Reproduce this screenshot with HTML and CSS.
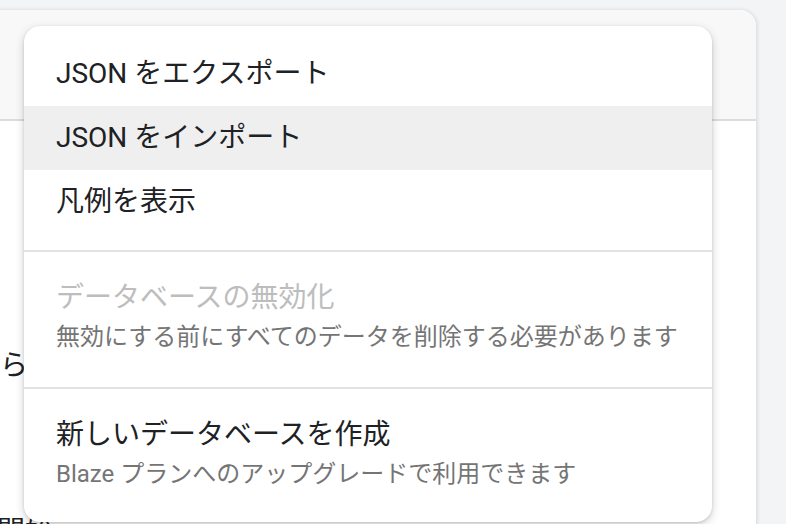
FILE: index.html
```html
<!DOCTYPE html>
<html lang="ja">
<head>
<meta charset="utf-8">
<link rel="stylesheet" href="styles.css">
</head>
<body>
<div class="card">
  <div class="card-header"></div>
  <div class="card-body">
    <p class="line line-a">ここから、</p>
    <p class="line line-b">開始</p>
  </div>
</div>
<div class="menu">
  <div class="item">JSON をエクスポート</div>
  <div class="item hover">JSON をインポート</div>
  <div class="item">凡例を表示</div>
  <div class="divider"></div>
  <div class="item2 item2-mid">
    <div class="title disabled">データベースの無効化</div>
    <div class="sub">無効にする前にすべてのデータを削除する必要があります</div>
  </div>
  <div class="divider divider-tight"></div>
  <div class="item2 item2-last">
    <div class="title">新しいデータベースを作成</div>
    <div class="sub">Blaze プランへのアップグレードで利用できます</div>
  </div>
</div>
</body>
</html>
```
FILE: styles.css
```css
html, body {
  margin: 0;
  padding: 0;
  height: 100%;
  overflow: hidden;
}
body {
  background: #f3f4f6;
  font-family: Roboto, "Noto Sans CJK JP", sans-serif;
  color: #202124;
}
.card {
  margin: 10px 30px 0 -40px;
  border-radius: 16px 16px 0 0;
  background: #fff;
  box-shadow: 1px 0 4px rgba(0,0,0,0.12);
  height: 600px;
  overflow: hidden;
}
.card-header {
  height: 109px;
  background: #f8f8f9;
  border-bottom: 2px solid #dcdcdc;
}
.card-body {
  padding-top: 225px;
}
.line {
  margin: 0;
  font-size: 28px;
  line-height: 40px;
  color: #202124;
  white-space: nowrap;
}
.line-a {
  margin-left: -44px;
}
.line-b {
  margin-top: 126px;
  margin-left: 37px;
}
.menu {
  position: absolute;
  left: 24px;
  top: 26px;
  width: 688px;
  background: #fff;
  border-radius: 16px;
  box-shadow: 0 3px 10px rgba(0,0,0,0.18), 0 1px 3px rgba(0,0,0,0.12);
  padding: 16px 0 18px;
}
.item {
  height: 64px;
  line-height: 64px;
  padding: 0 32px;
  font-size: 28px;
  color: #202124;
  white-space: nowrap;
}
.item.hover {
  background: #efefef;
}
.divider {
  margin-top: 16px;
  height: 2px;
  background: #e2e2e2;
}
.item2 {
  padding: 26px 32px 0;
  white-space: nowrap;
}
.item2-mid {
  padding-bottom: 31px;
}
.item2-last {
  padding-bottom: 11px;
}
.divider-tight {
  margin-top: 0;
}
.title {
  font-size: 28px;
  line-height: 40px;
  color: #202124;
}
.title.disabled {
  color: #bdbdbd;
}
.sub {
  font-size: 24px;
  line-height: 38px;
  color: #757575;
}
```
